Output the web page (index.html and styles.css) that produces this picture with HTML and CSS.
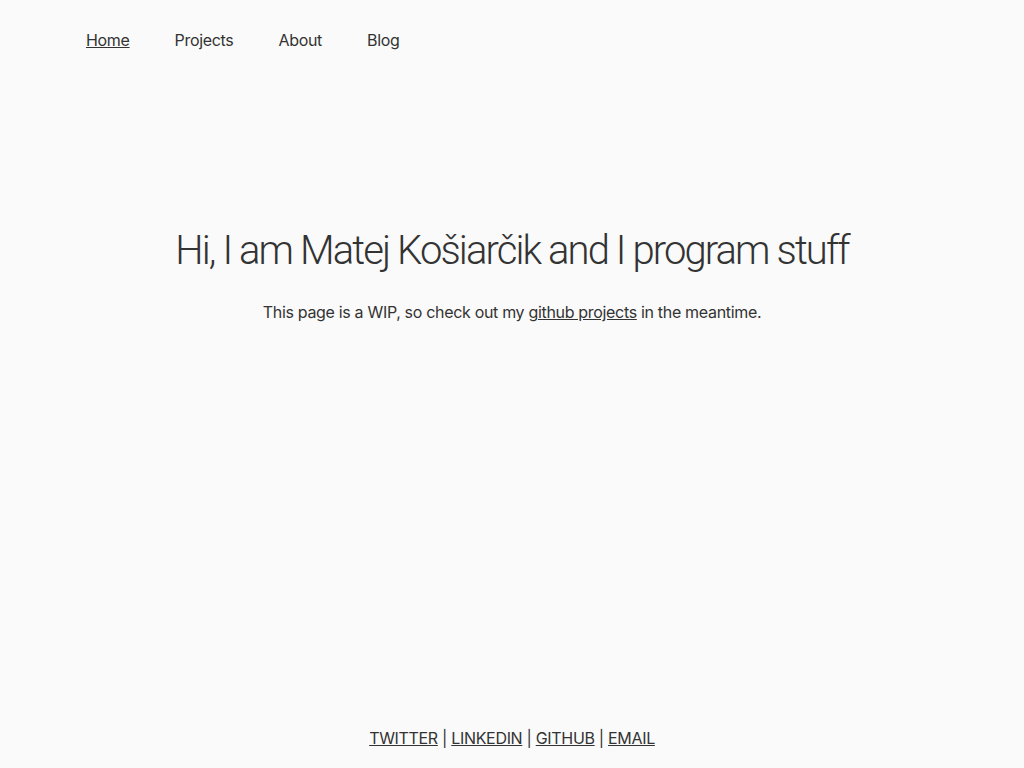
FILE: index.html
```html
<!DOCTYPE html>
<html lang="en">
<head>
<meta charset="utf-8">
<title>Matej Košiarčik</title>
<link rel="stylesheet" href="styles.css">
</head>
<body>
<div class="page">
  <nav class="nav">
    <a href="#" class="nav-link active">Home</a>
    <a href="#" class="nav-link">Projects</a>
    <a href="#" class="nav-link">About</a>
    <a href="#" class="nav-link">Blog</a>
  </nav>
  <main class="hero">
    <h1 class="title">Hi, I am Matej Košiarčik and I program stuff</h1>
    <p class="lead">This page is a WIP, so check out my <a href="#" class="ul">github projects</a> in the meantime.</p>
  </main>
  <footer class="footer">
    <a href="#" class="ul">TWITTER</a> | <a href="#" class="ul">LINKEDIN</a> | <a href="#" class="ul">GITHUB</a> | <a href="#" class="ul">EMAIL</a>
  </footer>
</div>
</body>
</html>
```
FILE: styles.css
```css
html, body {
  margin: 0;
  padding: 0;
  background: #fafafa;
  color: #333;
  font-family: Inter, "Noto Sans", sans-serif;
  font-size: 16px;
  letter-spacing: -0.32px;
}
.page {
  height: 768px;
  display: flex;
  flex-direction: column;
}
.nav {
  display: flex;
  gap: 45px;
  padding: 30px 86px 0;
  line-height: 20px;
}
.nav-link {
  color: #333;
  text-decoration: none;
}
.nav-link.active {
  text-decoration: underline;
}
.hero {
  text-align: center;
  padding-top: 176px;
  flex: 1;
}
.title {
  margin: 0;
  font-family: Roboto, Inter, sans-serif;
  font-weight: 300;
  font-size: 40px;
  line-height: 50px;
  letter-spacing: -1.9px;
}
.lead {
  margin: 25px 0 0;
  line-height: 22px;
}
.ul {
  color: #333;
  text-decoration: underline;
}
.footer {
  text-align: center;
  line-height: 20px;
  padding-bottom: 20px;
}
```
